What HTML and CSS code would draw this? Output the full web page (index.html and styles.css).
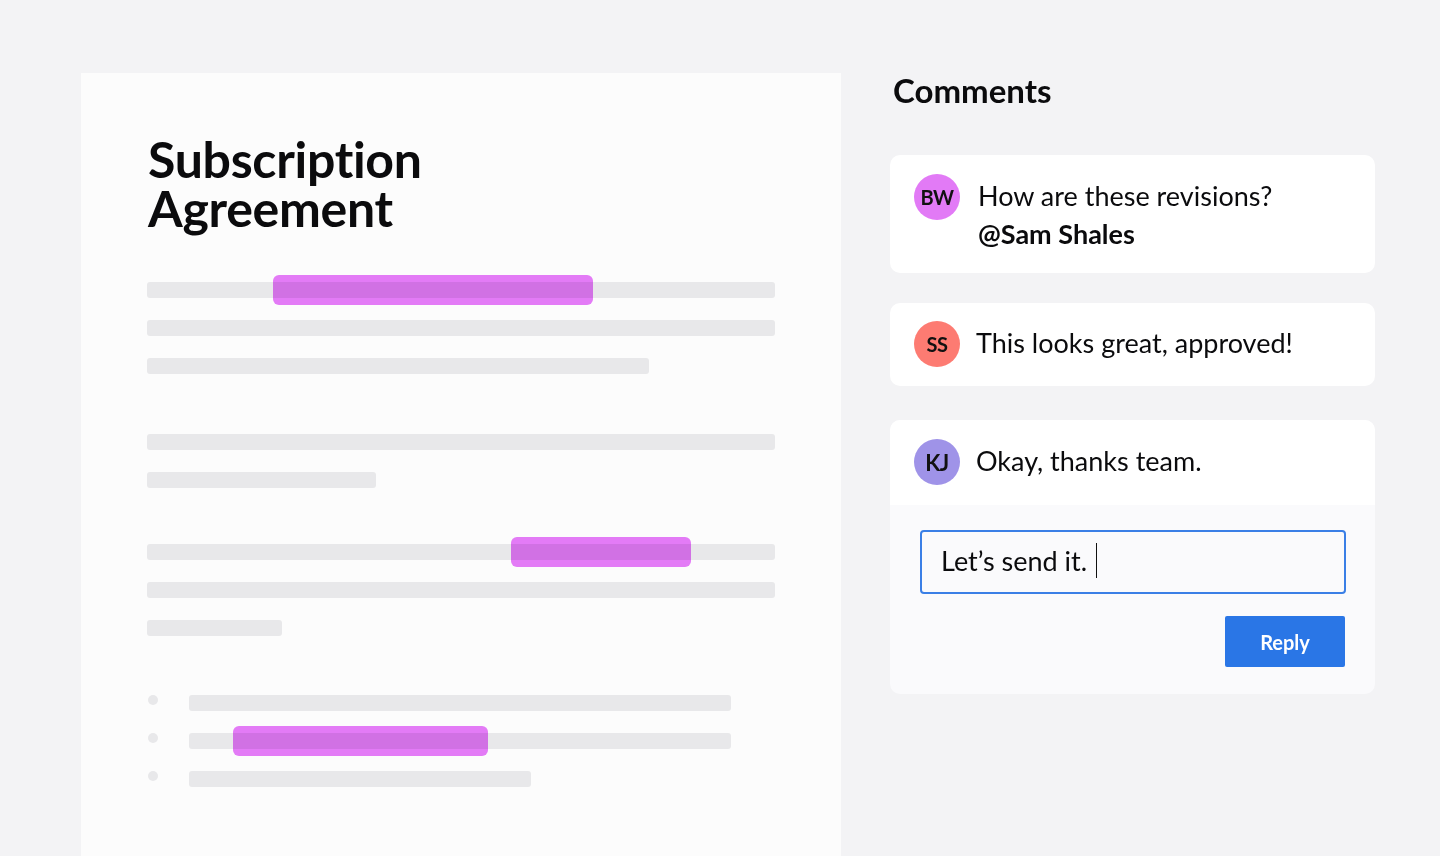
FILE: index.html
```html
<!DOCTYPE html>
<html lang="en">
<head>
<meta charset="utf-8">
<title>Subscription Agreement</title>
<link rel="stylesheet" href="styles.css">
</head>
<body>
<main class="page">
  <section class="doc">
    <h1 class="doc-title"><span class="line">Subscription</span><span class="line">Agreement</span></h1>
    <div class="group group-1">
      <div class="bar bar-full"><span class="hl" style="left:126px;width:320px"></span></div>
      <div class="bar bar-full"></div>
      <div class="bar" style="width:502px"></div>
    </div>
    <div class="group group-2">
      <div class="bar bar-full"></div>
      <div class="bar" style="width:229px"></div>
    </div>
    <div class="group group-3">
      <div class="bar bar-full"><span class="hl" style="left:364px;width:180px"></span></div>
      <div class="bar bar-full"></div>
      <div class="bar" style="width:135px"></div>
    </div>
    <ul class="group group-4">
      <li class="item"><span class="dot"></span><div class="bar" style="width:542px"></div></li>
      <li class="item"><span class="dot"></span><div class="bar" style="width:542px"><span class="hl" style="left:44px;width:255px"></span></div></li>
      <li class="item"><span class="dot"></span><div class="bar" style="width:342px"></div></li>
    </ul>
  </section>

  <aside class="comments">
    <h2 class="comments-title">Comments</h2>

    <div class="card card-1">
      <div class="comment">
        <span class="avatar av-bw">BW</span>
        <p class="text">How are these revisions?<br><strong>@Sam Shales</strong></p>
      </div>
    </div>

    <div class="card card-2">
      <div class="comment">
        <span class="avatar av-ss">SS</span>
        <p class="text">This looks great, approved!</p>
      </div>
    </div>

    <div class="card card-3">
      <div class="comment">
        <span class="avatar av-kj">KJ</span>
        <p class="text">Okay, thanks team.</p>
      </div>
      <div class="reply">
        <div class="input">Let’s send it.<span class="caret"></span></div>
        <div class="actions"><button class="btn">Reply</button></div>
      </div>
    </div>
  </aside>
</main>
</body>
</html>
```

FILE: styles.css
```css
* { box-sizing: border-box; }
html, body { margin: 0; padding: 0; }
body {
  background: #f3f3f5;
  font-family: Lato, "Liberation Sans", sans-serif;
  color: #0b0b0d;
  width: 1440px;
  height: 856px;
  overflow: hidden;
}
.page {
  display: flex;
  align-items: flex-start;
  gap: 49px;
  padding: 73px 0 0 81px;
}
.doc {
  width: 760px;
  height: 800px;
  background: #fcfcfc;
  padding: 62px 0 0 66px;
}
.doc-title {
  margin: 0 0 0 1px;
  font-size: 50px;
  line-height: 49px;
  font-weight: 700;
  letter-spacing: -0.3px;
  display: flex;
  flex-direction: column;
}
.doc-title .line { display: block; height: 49px; }
.group {
  display: flex;
  flex-direction: column;
  gap: 22px;
  margin: 0;
  padding: 0;
  list-style: none;
}
.group-1 { margin-top: 49px; }
.group-2 { margin-top: 60px; }
.group-3 { margin-top: 56px; }
.group-4 { margin-top: 59px; }
.bar {
  position: relative;
  height: 16px;
  background: #e8e8ea;
  border-radius: 3px;
}
.bar-full { width: 628px; }
.hl {
  position: absolute;
  top: -7px;
  height: 30px;
  border-radius: 6px;
  background: #e67cf9;
  mix-blend-mode: multiply;
}
.item {
  display: flex;
  align-items: center;
  gap: 31px;
}
.item .bar { flex: none; }
.dot {
  width: 10px;
  height: 10px;
  margin-left: 1px;
  border-radius: 50%;
  background: #e8e8ea;
  position: relative;
  top: -3px;
}
.comments {
  width: 485px;
  display: flex;
  flex-direction: column;
}
.comments-title {
  margin: -3px 0 45px 3px;
  font-size: 33px;
  line-height: 40px;
  font-weight: 700;
}
.card {
  background: #fff;
  border-radius: 10px;
  margin-bottom: 30px;
  overflow: hidden;
}
.card-1 { padding: 19px 24px 20px; height: 118px; }
.card-2 { padding: 18px 24px; height: 83px; margin-bottom: 34px; }
.card-3 { height: 274px; background: #fafafc; }
.card-3 .comment { background: #fff; padding: 19px 24px 20px; height: 85px; }
.comment {
  display: flex;
  align-items: flex-start;
  gap: 16px;
}
.card-1 .comment { gap: 18px; }
.avatar {
  flex: none;
  width: 46px;
  height: 46px;
  border-radius: 50%;
  display: flex;
  align-items: center;
  justify-content: center;
  font-size: 20px;
  font-weight: 700;
  color: #111;
  letter-spacing: -0.5px;
}
.av-bw { background: #e27af6; }
.av-ss { background: #fd7b72; }
.av-kj { background: #9f93e8; font-size: 22px; }
.text {
  margin: 0;
  font-size: 27px;
  line-height: 38px;
  font-weight: 400;
  padding-top: 3px;
}
.text strong { font-weight: 700; }
.reply {
  padding: 25px 29px 27px 30px;
}
.input {
  height: 64px;
  border: 2px solid #3a7fe6;
  border-radius: 4px;
  background: #fafafc;
  padding: 0 19px 3px 19px;
  display: flex;
  align-items: center;
  font-size: 27px;
}
.caret {
  display: inline-block;
  width: 1px;
  height: 35px;
  background: #111;
  margin-left: 9px;
}
.actions {
  display: flex;
  justify-content: flex-end;
  margin-top: 22px;
}
.btn {
  width: 120px;
  height: 51px;
  margin-right: 1px;
  border: 0;
  border-radius: 2px;
  background: #2a76e6;
  color: #fff;
  font-family: inherit;
  font-size: 20px;
  font-weight: 700;
}
```
